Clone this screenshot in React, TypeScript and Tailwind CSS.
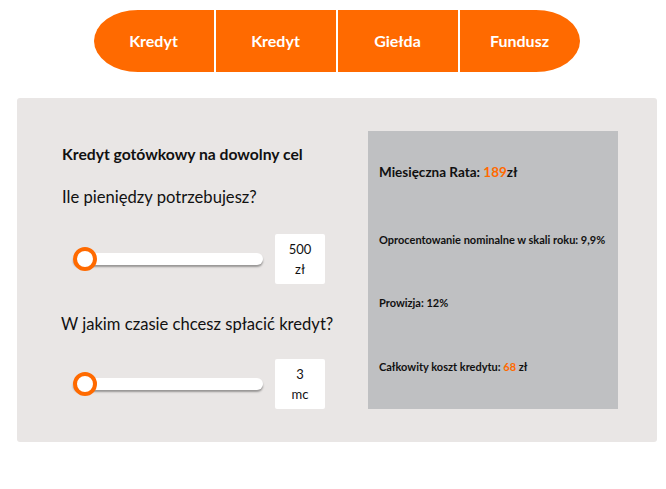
import { FC } from "react"

const font = { fontFamily: '"Lato", "Noto Sans", sans-serif' }

const tabs = ["Kredyt", "Kredyt", "Giełda", "Fundusz"]

const Slider: FC = () => (
  <div className="relative w-[190px] h-[12px] rounded-full bg-white shadow-[0_2px_2px_rgba(0,0,0,0.35)]">
    <div className="absolute left-0 top-[-6px] w-[24px] h-[24px] rounded-full border-[4px] border-[#ff6a00] bg-white" />
  </div>
)

const ValueBox: FC<{ value: string; unit: string }> = ({ value, unit }) => (
  <div className="w-[50px] h-[50px] bg-white rounded-[2px] flex flex-col items-center justify-center text-[13px] leading-[20px] text-[#111]">
    <span>{value}</span>
    <span>{unit}</span>
  </div>
)

export default function App() {
  return (
    <div className="w-[666px] h-[489px] bg-white" style={font}>
      <nav className="flex justify-center pt-[10px] pl-[7px]">
        <div className="flex gap-[2px]">
          {tabs.map((t, i) => (
            <div
              key={i}
              className={
                "w-[120px] h-[62px] bg-[#ff6a00] text-white font-bold text-[16px] flex items-center justify-center " +
                (i === 0 ? "rounded-tl-[44px_31px] rounded-bl-[44px_31px]" : "") +
                (i === 3 ? "rounded-tr-[44px_31px] rounded-br-[44px_31px]" : "")
              }
            >
              {t}
            </div>
          ))}
        </div>
      </nav>

      <section className="mx-[17px] mt-[26px] w-[640px] h-[344px] bg-[#e9e6e5] rounded-[3px] flex pt-[33px]">
        <div className="w-[351px] pl-[45px] text-[#111]">
          <h2 className="font-bold text-[15.7px] leading-[20px] mt-[13px]">Kredyt gotówkowy na dowolny cel</h2>
          <p className="text-[16.6px] leading-[20px] mt-[23px]">Ile pieniędzy potrzebujesz?</p>
          <div className="flex items-center mt-[27px] pl-[11px] gap-[12px]">
            <Slider />
            <ValueBox value="500" unit="zł" />
          </div>
          <p className="text-[16.6px] leading-[20px] mt-[30px] -ml-[1px]">W jakim czasie chcesz spłacić kredyt?</p>
          <div className="flex items-center mt-[25px] pl-[11px] gap-[12px]">
            <Slider />
            <ValueBox value="3" unit="mc" />
          </div>
        </div>

        <div className="w-[250px] h-[278px] bg-[#bfc0c2] pl-[11px] text-[#111] flex flex-col">
          <p className="font-bold text-[13.5px] leading-[18px] mt-[32px]">
            Miesięczna Rata: <span className="text-[#ff6a00]">189</span>zł
          </p>
          <p className="font-bold text-[11px] leading-[16px] mt-[51px]">Oprocentowanie nominalne w skali roku: 9,9%</p>
          <p className="font-bold text-[11px] leading-[16px] mt-[47px]">Prowizja: 12%</p>
          <p className="font-bold text-[11px] leading-[16px] mt-[48px]">
            Całkowity koszt kredytu: <span className="text-[#ff6a00]">68</span> zł
          </p>
        </div>
      </section>
    </div>
  )
}
